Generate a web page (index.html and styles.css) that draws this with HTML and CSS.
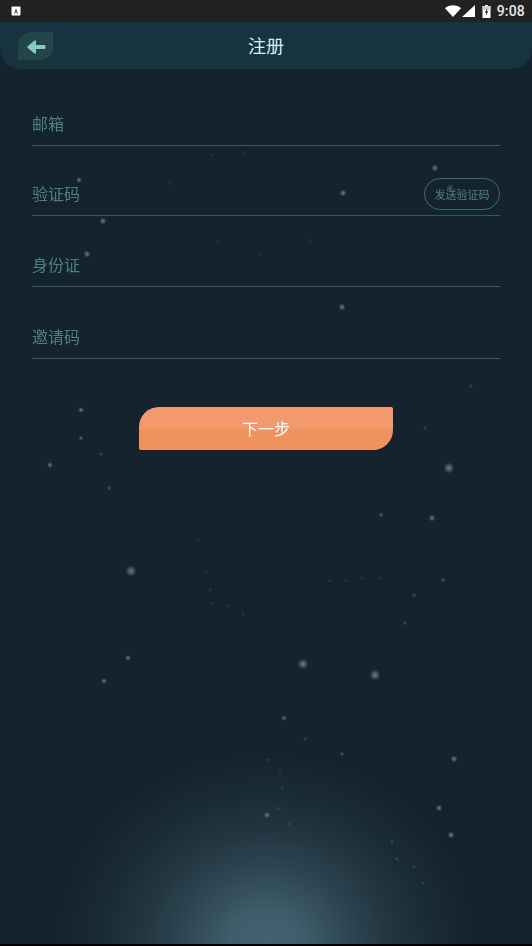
FILE: index.html
```html
<!DOCTYPE html>
<html lang="zh">
<head>
<meta charset="utf-8">
<title>注册</title>
<link rel="stylesheet" href="styles.css">
</head>
<body>
<div class="screen">
  <svg class="stars" width="532" height="944" viewBox="0 0 532 944" aria-hidden="true">
    <defs>
      <radialGradient id="s"><stop offset="0" stop-color="#9fb4bd"/><stop offset=".45" stop-color="#8ba2ac" stop-opacity=".7"/><stop offset="1" stop-color="#8ba2ac" stop-opacity="0"/></radialGradient>
    </defs>
    <g fill="url(#s)" class="star-group">
      <circle cx="131" cy="571" r="5.500"/><circle cx="449" cy="468" r="5.500"/><circle cx="303" cy="664" r="5.500"/><circle cx="375" cy="675" r="5.500"/>
      <circle cx="79" cy="180" r="3"/><circle cx="103" cy="221" r="3.500"/><circle cx="87" cy="254" r="3.500"/><circle cx="343" cy="193" r="3.500"/><circle cx="342" cy="307" r="3.500"/><circle cx="435" cy="168" r="3.500"/><circle cx="450" cy="188" r="4" opacity=".6"/>
      <circle cx="81" cy="410" r="3"/><circle cx="81" cy="438" r="2.500" opacity=".8"/><circle cx="50" cy="465" r="3"/><circle cx="101" cy="454" r="2.500" opacity=".5"/><circle cx="109" cy="488" r="2.500" opacity=".6"/>
      <circle cx="128" cy="658" r="3"/><circle cx="104" cy="681" r="3"/><circle cx="432" cy="518" r="3.500"/><circle cx="381" cy="515" r="3" opacity=".6"/><circle cx="443" cy="580" r="2.500" opacity=".6"/><circle cx="414" cy="595" r="2.500" opacity=".5"/><circle cx="405" cy="623" r="2.500" opacity=".5"/>
      <circle cx="284" cy="718" r="3" opacity=".8"/><circle cx="305" cy="739" r="2" opacity=".5"/><circle cx="342" cy="754" r="2.500" opacity=".6"/><circle cx="454" cy="759" r="3.500"/><circle cx="439" cy="808" r="3.500"/><circle cx="451" cy="835" r="3.500"/><circle cx="267" cy="815" r="3.500" opacity=".9"/>
      <circle cx="269" cy="760" r="2" opacity=".4"/><circle cx="280" cy="773" r="2" opacity=".3"/><circle cx="282" cy="788" r="2" opacity=".4"/><circle cx="278" cy="809" r="2" opacity=".4"/><circle cx="289" cy="824" r="2" opacity=".4"/>
      <circle cx="392" cy="842" r="2" opacity=".5"/><circle cx="397" cy="859" r="2" opacity=".5"/><circle cx="414" cy="867" r="2" opacity=".5"/><circle cx="423" cy="883" r="2" opacity=".4"/>
      <circle cx="471" cy="386" r="2.500" opacity=".4"/><circle cx="425" cy="428" r="2.500" opacity=".4"/><circle cx="198" cy="540" r="2" opacity=".3"/><circle cx="206" cy="572" r="2" opacity=".3"/><circle cx="210" cy="590" r="2" opacity=".35"/><circle cx="212" cy="603" r="2" opacity=".3"/><circle cx="228" cy="606" r="2" opacity=".3"/><circle cx="243" cy="614" r="2" opacity=".3"/>
      <circle cx="330" cy="581" r="2" opacity=".3"/><circle cx="346" cy="581" r="2" opacity=".3"/><circle cx="362" cy="578" r="2" opacity=".3"/><circle cx="380" cy="578" r="2" opacity=".3"/>
      <circle cx="212" cy="155" r="2" opacity=".25"/><circle cx="245" cy="153" r="2" opacity=".25"/><circle cx="170" cy="183" r="2" opacity=".2"/><circle cx="218" cy="242" r="2" opacity=".25"/><circle cx="260" cy="254" r="2" opacity=".25"/><circle cx="310" cy="241" r="2" opacity=".2"/>
    </g>
  </svg>

  <div class="status">
    <svg class="notif" width="10" height="10" viewBox="0 0 10 10"><rect x=".5" y=".5" width="9" height="9" rx="1" fill="#fff"/><path d="M3 7.500 5 2.600 7 7.500H5.900L5 5 4.100 7.500Z" fill="#333"/></svg>
    <div class="status-right">
      <svg width="16" height="12" viewBox="0 0 16 12"><path d="M0 3.200C4.500-.6 11.500-.6 16 3.200L8 12Z" fill="#fff"/></svg>
      <svg width="13" height="12" viewBox="0 0 13 12"><path d="M13 0V12H0Z" fill="#fff"/></svg>
      <svg class="batt" width="9" height="13" viewBox="0 0 9 13"><path d="M3 0H6V1H8.500V13H.5V1H3Z" fill="#fff"/><path d="M.5 1H8.500V5H.5Z" fill="#cfcfcf"/><path d="M5.300 3 2.800 7.600H4.300L3.700 11 6.300 6.200H4.700Z" fill="#222"/></svg>
      <span class="clock">9:08</span>
    </div>
  </div>

  <header class="bar">
    <button class="back" aria-label="返回">
      <svg width="36" height="31" viewBox="0 0 36 31"><path d="M14 2H32V1L35 1.500V17C35 25 29 30 22 30H3V31L0 30.500V15C0 7 6 2 14 2Z" fill="#234449"/><path d="M9 17 11 15 16.500 10.500H18V15H27Q28.500 17 27 19H18V23.500H16.500L11 19Z" fill="#86c8c8"/></svg>
    </button>
    <h1 class="title">注册</h1>
  </header>

  <main class="form">
    <div class="field"><span class="label">邮箱</span></div>
    <div class="field f2"><span class="label">验证码</span><button class="send">发送验证码</button></div>
    <div class="field f3"><span class="label">身份证</span></div>
    <div class="field f4"><span class="label">邀请码</span></div>
    <button class="next">下一步</button>
  </main>
  <div class="navline"></div>
</div>
</body>
</html>
```
FILE: styles.css
```css
* { box-sizing: border-box; }
html, body { margin: 0; padding: 0; }
body { width: 532px; height: 946px; overflow: hidden; background: #15232f; font-family: "Noto Sans CJK SC", "Noto Sans", sans-serif; }
.screen {
  position: relative; width: 532px; height: 946px; display: flex; flex-direction: column;
  background:
    radial-gradient(ellipse 205px 190px at 266px 946px, #42626f 0%, #3f5d6b 18%, #304955 38%, #233843 58%, #1a2c38 78%, #15232f 100%),
    #15232f;
}
.stars { position: absolute; left: 0; top: 0; }
.star-group { opacity: .6; }
.status { position: relative; height: 22px; flex: none; background: #222222; display: flex; align-items: center; justify-content: space-between; padding: 0 7px 0 11px; }
.notif { display: block; }
.status-right { display: flex; align-items: center; gap: 1px; color: #e8e8e8; }
.batt { margin-left: 6px; }
.clock { font: 14px/22px Roboto, sans-serif; font-weight: 500; margin-left: 5px; letter-spacing: .2px; }
.bar { position: relative; height: 47px; flex: none; background: #173340; border-radius: 0 0 20px 20px; display: flex; align-items: center; justify-content: center; }
.back { position: absolute; left: 18px; top: 8px; width: 36px; height: 31px; padding: 0; border: 0; background: none; }
.back svg { display: block; }
.title { margin: 0; font-size: 18px; font-weight: 400; color: #d5f0f0; line-height: 47px; }
.form { position: relative; display: flex; flex-direction: column; padding: 6px 32px 0; }
.field { display: flex; align-items: center; justify-content: space-between; height: 71px; padding-top: 26px; border-bottom: 1px solid #2f5a60; }
.f2 { height: 70px; padding-top: 25px; }
.f3 { height: 71px; padding-top: 26px; }
.f4 { height: 72px; padding-top: 27px; }
.label { font-size: 16px; line-height: 24px; color: #4e7f84; }
.send { width: 76px; height: 32px; margin: 1px 0 0; padding: 0; border: 1px solid #3a6a70; border-radius: 16px; background: none; color: #4e8086; font: 11px/30px "Noto Sans CJK SC", sans-serif; }
.next { align-self: center; width: 254px; height: 43px; margin-top: 48px; padding: 0; border: 0; border-radius: 20px 2px 20px 2px; background: linear-gradient(#f29a6e 0, #f29a6e 48%, #f0925e 52%, #f0925e 100%); color: #fff; font: 16px/43px "Noto Sans CJK SC", sans-serif; }
.navline { position: absolute; left: 0; right: 0; bottom: 0; height: 2px; background: #000; }
```
